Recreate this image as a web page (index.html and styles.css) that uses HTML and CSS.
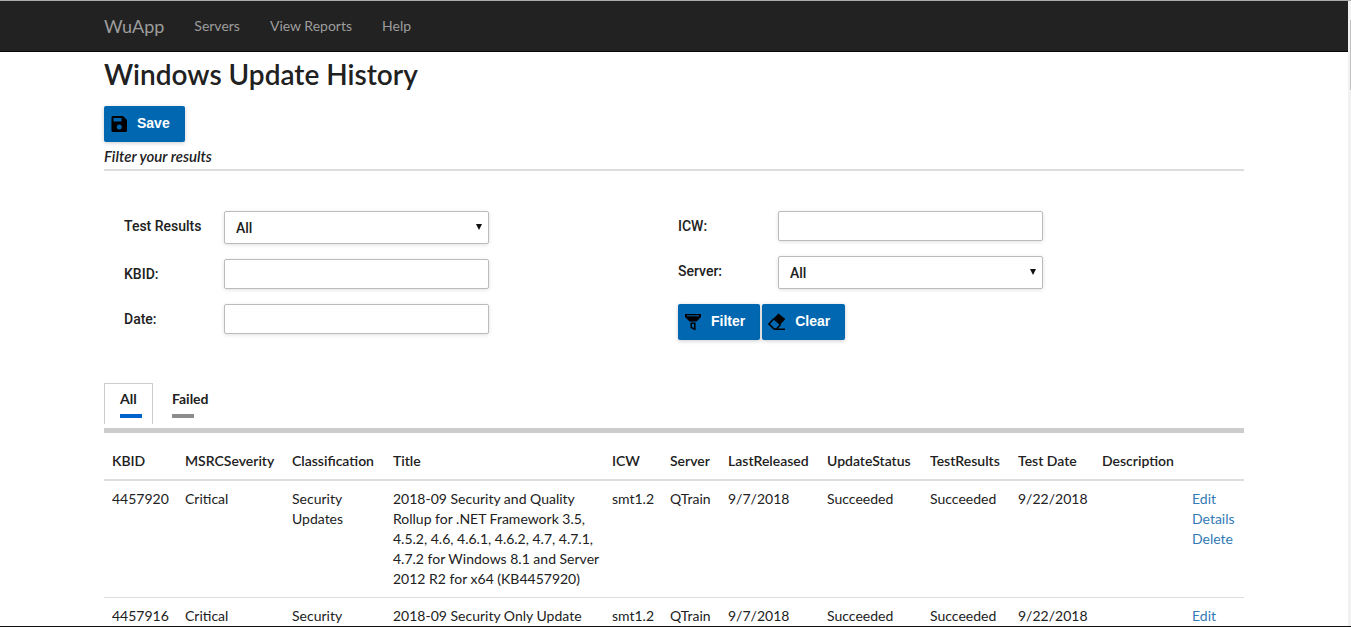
FILE: index.html
```html
<!DOCTYPE html>
<html lang="en">
<head>
<meta charset="utf-8">
<title>Windows Update History - WuApp</title>
<link rel="stylesheet" href="styles.css">
</head>
<body>
<div class="viewport">
  <div class="page">
    <header class="navbar">
      <nav class="container nav">
        <a class="brand" href="#">WuApp</a>
        <a class="nav-link" href="#">Servers</a>
        <a class="nav-link" href="#">View Reports</a>
        <a class="nav-link" href="#">Help</a>
      </nav>
    </header>
    <main class="container">
      <h1 class="title">Windows Update History</h1>
      <button class="btn" type="button">
        <svg class="icon" viewBox="0 0 18 18" aria-hidden="true"><path fill-rule="evenodd" d="M3 1h10l4 4v10.500q0 1.500-1.500 1.500H3q-1.500 0-1.500-1.500V2.500Q1.500 1 3 1zM3.500 3v3.500h8V3zM9.300 9.500a2.500 2.500 0 1 0 0 5 2.500 2.500 0 0 0 0-5z"/></svg>
        Save
      </button>
      <h2 class="legend">Filter your results</h2>
      <form class="filters">
        <div class="fields">
          <div class="field"><label for="result">Test Results</label><span class="select"><select id="result"><option>All</option></select></span></div>
          <div class="field"><label for="kbid">KBID:</label><input id="kbid" type="text"></div>
          <div class="field"><label for="date">Date:</label><input id="date" type="text"></div>
        </div>
        <div class="fields">
          <div class="field"><label for="icw">ICW:</label><input id="icw" type="text"></div>
          <div class="field"><label for="server">Server:</label><span class="select"><select id="server"><option>All</option></select></span></div>
          <div class="actions">
            <button class="btn" type="button">
              <svg class="icon" viewBox="0 0 18 18" aria-hidden="true"><path d="M1 1h16v3l-4.500 4.500h-7L1 4z"/><path d="M3 2.800h12" stroke="#0067b0" stroke-width="1"/><path d="M7.200 10.200h3.600v6l-3.600-1.700z" fill="none" stroke="#000" stroke-width="1.500"/></svg>
              Filter
            </button>
            <button class="btn" type="button">
              <svg class="icon" viewBox="0 0 18 18" aria-hidden="true"><path d="M10.500 0.500l6.800 5.500-5.300 6L5 6z"/><path d="M5.500 6l-4.500 5L6 16h2.500l4-4.500M6.500 16.200H17" fill="none" stroke="#000" stroke-width="1.600"/></svg>
              Clear
            </button>
          </div>
        </div>
      </form>
      <div class="tabs" role="tablist">
        <button class="tab tab-active" type="button" role="tab" aria-selected="true">All</button>
        <button class="tab" type="button" role="tab" aria-selected="false">Failed</button>
      </div>
      <table class="results">
        <colgroup><col class="w73"><col class="w107"><col class="w101"><col class="w219"><col class="w58"><col class="w58"><col class="w99"><col class="w103"><col class="w88"><col class="w84"><col class="w90"><col class="w60"></colgroup>
        <thead>
          <tr><th>KBID</th><th>MSRCSeverity</th><th>Classification</th><th>Title</th><th>ICW</th><th>Server</th><th>LastReleased</th><th>UpdateStatus</th><th>TestResults</th><th>Test Date</th><th>Description</th><th></th></tr>
        </thead>
        <tbody>
          <tr><td>4457920</td><td>Critical</td><td>Security Updates</td><td>2018-09 Security and Quality Rollup for .NET Framework 3.5, 4.5.2, 4.6, 4.6.1, 4.6.2, 4.7, 4.7.1, 4.7.2 for Windows 8.1 and Server 2012 R2 for x64 (KB4457920)</td><td>smt1.2</td><td>QTrain</td><td>9/7/2018</td><td>Succeeded</td><td>Succeeded</td><td>9/22/2018</td><td></td><td><a href="#">Edit</a> <a href="#">Details</a> <a href="#">Delete</a></td></tr>
          <tr><td>4457916</td><td>Critical</td><td>Security</td><td>2018-09 Security Only Update</td><td>smt1.2</td><td>QTrain</td><td>9/7/2018</td><td>Succeeded</td><td>Succeeded</td><td>9/22/2018</td><td></td><td><a href="#">Edit</a></td></tr>
        </tbody>
      </table>
    </main>
  </div>
  <div class="scrollbar"><div class="thumb"></div></div>
</div>
</body>
</html>
```
FILE: styles.css
```css
* { box-sizing: border-box; }
body { margin: 0; font: 14px/20px Lato, sans-serif; color: #212121; background: #fff; }
a { color: #337ab7; text-decoration: none; }
.viewport { display: flex; height: 100vh; overflow: hidden; border-top: 1px solid #ababab; border-bottom: 1px solid #111; }
.page { flex: 1; min-width: 0; overflow: hidden; }
.scrollbar { width: 3px; padding: 19px 0 0 2px; background: #f1f1f1; }
.thumb { height: 70px; background: #c1c1c1; }
.container { max-width: 1170px; margin: 0 auto; padding: 0 15px; }

.navbar { background: #222; border-bottom: 1px solid #080808; }
.nav { display: flex; align-items: center; gap: 30px; height: 50px; }
.nav a { color: #9d9d9d; }
.nav .brand { font-size: 18px; }

.title { margin: 5px 0 15px; font-size: 28px; line-height: 34px; font-weight: 600; }
.btn { display: inline-flex; align-items: center; gap: 9px; height: 36px; padding: 0 15px 2px 6px; border: 0; border-radius: 2px; background: #0067b0; color: #fff; font: bold 14px/20px "Liberation Sans", Arial, sans-serif; box-shadow: 0 1px 4px rgba(0,0,0,.2); vertical-align: top; }
.icon { width: 18px; height: 18px; margin-top: 2px; }
.legend { margin: 4px 0 40px; padding-bottom: 3px; border-bottom: 2px solid #ddd; font-size: 15px; line-height: 20px; font-style: italic; font-weight: 600; }

.filters { display: grid; grid-template-columns: 554px 1fr; padding: 0 20px; min-height: 172px; }
.fields { display: flex; flex-direction: column; gap: 15px; align-items: flex-start; }
.field { display: flex; }
.field label { width: 100px; padding-top: 5px; font: 500 14px/20px Roboto, sans-serif; }
.field input, .select { width: 265px; height: 30px; border: 1px solid #bbb; border-radius: 2px; background: #fff; box-shadow: 0 1px 4px rgba(0,0,0,.12); }
.field .select { position: relative; height: 33px; }
.select::after { content: ""; position: absolute; right: 6px; top: 12px; border: 3px solid transparent; border-top: 6px solid #111; border-bottom: 0; pointer-events: none; }
.select select { width: 100%; height: 100%; padding: 0 11px; border: 0; background: transparent; appearance: none; color: #212121; font: 500 14px/20px Roboto, sans-serif; }
.actions { display: flex; gap: 2px; }

.tabs { display: flex; gap: 3px; border-bottom: 5px solid #ccc; padding-bottom: 4px; }
.tab { display: flex; flex-direction: column; gap: 5px; height: 41px; padding: 5px 10px 0 15px; border: 1px solid transparent; border-bottom: 0; background: none; color: #212121; font: bold 14px/20px Lato, sans-serif; text-align: left; }
.tab::after { content: ""; width: 22px; height: 4px; background: #8c8c8c; }
.tab-active { border-color: #ccc; }
.tab-active::after { background: #0062cc; }

.results { width: 100%; margin-top: 10px; table-layout: fixed; border-collapse: collapse; }
.results th { padding: 8px; border-bottom: 2px solid #ddd; text-align: left; font-weight: 600; white-space: nowrap; }
.results td { padding: 8px 4px 8px 8px; border-bottom: 1px solid #ddd; vertical-align: top; }
.w58 { width: 58px; }
.w60 { width: 60px; }
.w73 { width: 73px; }
.w84 { width: 84px; }
.w88 { width: 88px; }
.w90 { width: 90px; }
.w99 { width: 99px; }
.w101 { width: 101px; }
.w103 { width: 103px; }
.w107 { width: 107px; }
.w219 { width: 219px; }
```
